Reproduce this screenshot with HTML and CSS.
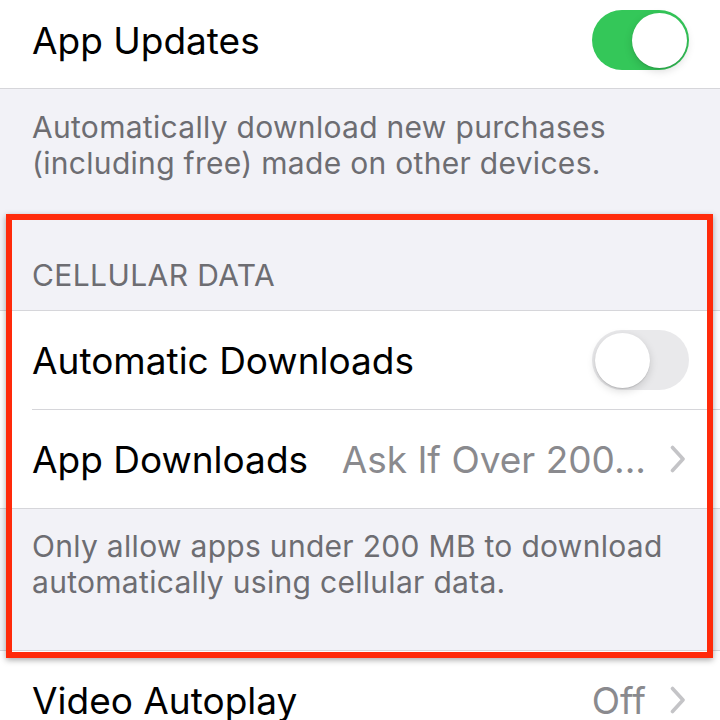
FILE: index.html
```html
<!DOCTYPE html>
<html lang="en">
<head>
    <meta charset="UTF-8">
    <meta name="viewport" content="width=device-width, initial-scale=1.0">
    <title>App Store Settings</title>
    <link rel="stylesheet" href="styles.css">
</head>
<body>
    <div class="screen">
        <div class="group group-first">
            <div class="row row-first">
                <span class="label">App Updates</span>
                <span class="switch on"><span class="knob"></span></span>
            </div>
        </div>
        <p class="footer">Automatically download new purchases<br>(including free) made on other devices.</p>

        <p class="header">CELLULAR DATA</p>
        <div class="group">
            <div class="row">
                <span class="label">Automatic Downloads</span>
                <span class="switch"><span class="knob"></span></span>
            </div>
            <div class="row row-link">
                <span class="label">App Downloads</span>
                <span class="detail">Ask If Over 200...
                    <svg class="chevron" width="16" height="28" viewBox="0 0 16 28"><polyline points="2.5,2.5 13,14 2.5,25.5" fill="none" stroke="#c4c4c7" stroke-width="3.6" stroke-linecap="round" stroke-linejoin="round"/></svg>
                </span>
            </div>
        </div>
        <p class="footer footer-last">Only allow apps under 200 MB to download<br>automatically using cellular data.</p>

        <div class="group">
            <div class="row row-link">
                <span class="label">Video Autoplay</span>
                <span class="detail">Off
                    <svg class="chevron" width="16" height="28" viewBox="0 0 16 28"><polyline points="2.5,2.5 13,14 2.5,25.5" fill="none" stroke="#c4c4c7" stroke-width="3.6" stroke-linecap="round" stroke-linejoin="round"/></svg>
                </span>
            </div>
        </div>

        <!-- red highlight drawn over the cellular section -->
        <div class="highlight"></div>
    </div>
</body>
</html>
```

FILE: styles.css
```css
body { margin: 0; padding: 0; background-color: #f2f2f7; font-family: Inter, "Noto Sans", sans-serif; }
.screen { position: relative; width: 720px; height: 720px; overflow: hidden; }

.group { background-color: #fff; border-top: 1px solid #d6d6da; border-bottom: 1px solid #d6d6da; }
.group-first { border-top: none; }

.row { display: flex; align-items: center; justify-content: space-between; height: 98px; padding: 0 31px 0 32px; position: relative; }
.row + .row { border-top: 1px solid #d6d6da; margin-left: 32px; padding-left: 0; }
.row-first { height: 80px; padding-bottom: 8px; }
.row-link { padding-right: 34px; }

.label { font-size: 37px; color: #000; white-space: nowrap; }
.detail { display: flex; align-items: center; gap: 24px; font-size: 37px; color: #8a8a8e; white-space: nowrap; }

.switch { width: 97px; height: 60px; border-radius: 30px; background-color: #e9e9eb; position: relative; flex-shrink: 0; }
.switch.on { background-color: #34c759; }
.knob { position: absolute; top: 2.5px; left: 2.5px; width: 55px; height: 55px; border-radius: 50%; background-color: #fff; box-shadow: 0 3px 8px rgba(0,0,0,0.15), 0 1px 1px rgba(0,0,0,0.12); }
.switch.on .knob { left: 39.5px; }

.footer { margin: 0; padding: 20px 32px 0; font-size: 30px; line-height: 36px; color: #6d6d72; letter-spacing: 0.3px; }
.footer-last { padding: 19px 32px 50px; }
.header { margin: 0; padding: 76px 32px 17px; font-size: 30px; line-height: 36px; color: #6d6d72; letter-spacing: 0.4px; }

.highlight { position: absolute; left: 6px; top: 214px; width: 707px; height: 444px; box-sizing: border-box; border: 6px solid #ff2a0a; box-shadow: 0 2px 6px rgba(0,0,0,0.35); }
```
